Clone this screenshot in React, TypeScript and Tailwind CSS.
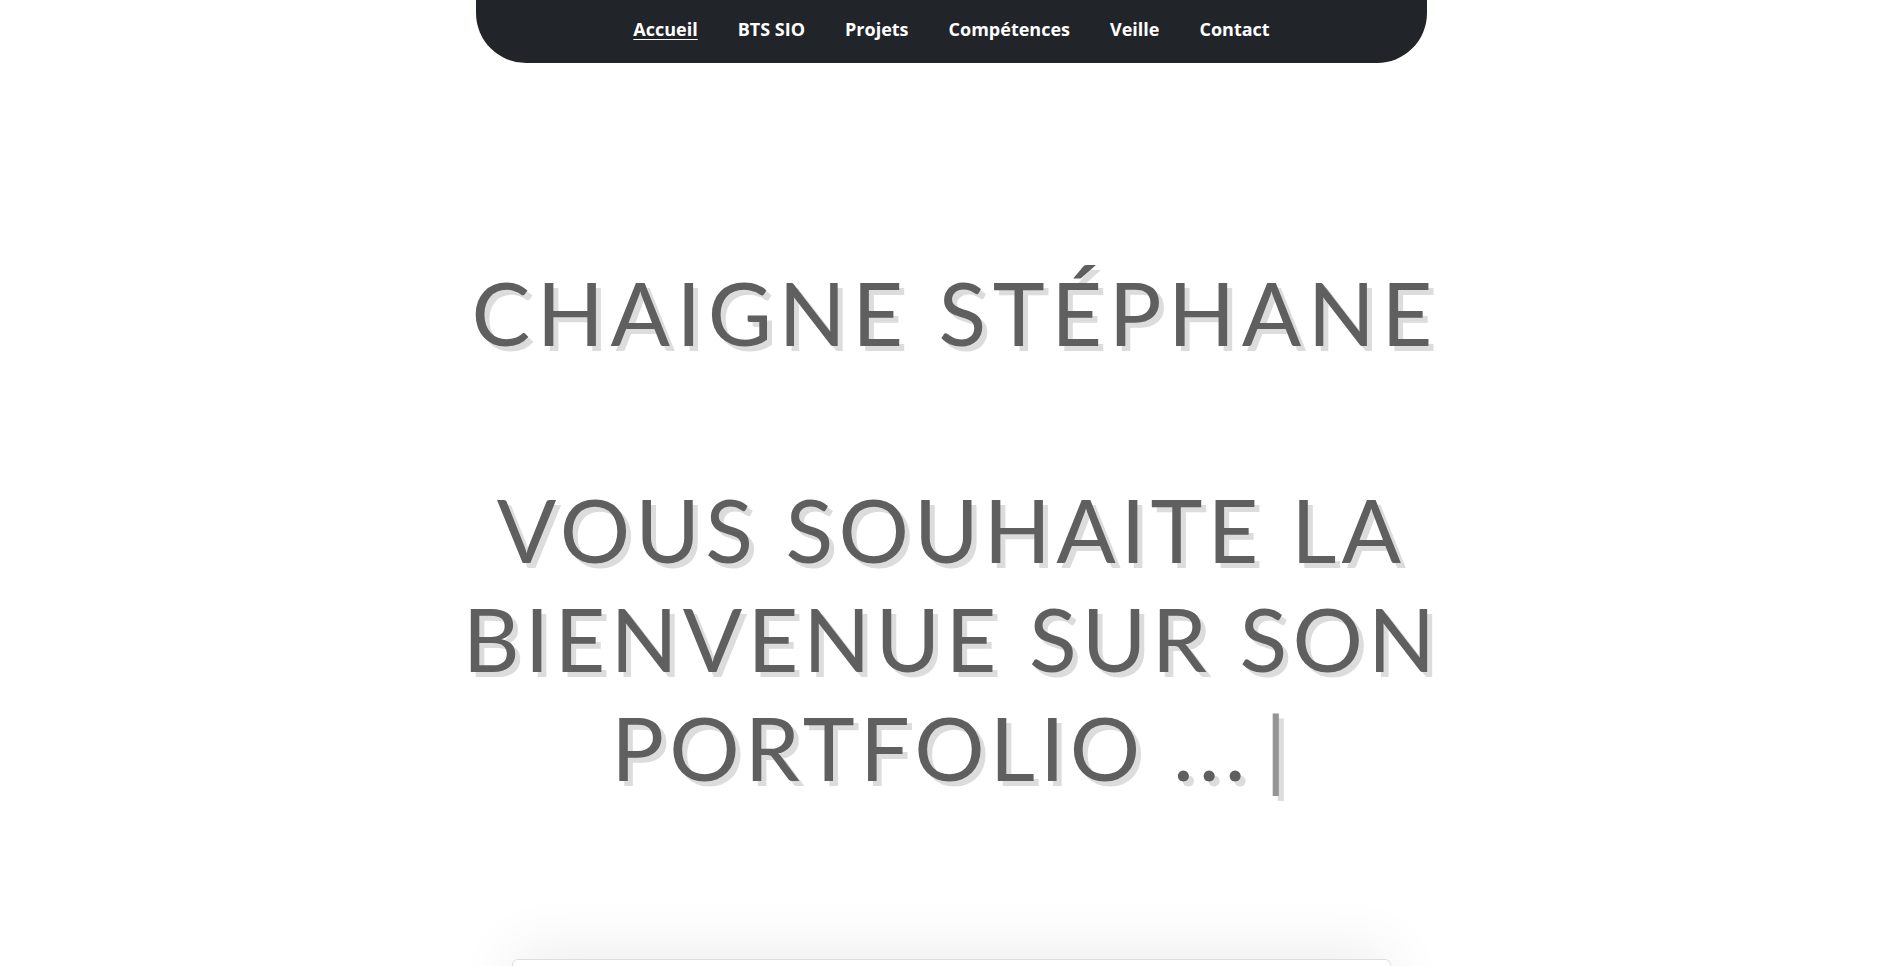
import React from 'react';

const links = ['Accueil', 'BTS SIO', 'Projets', 'Compétences', 'Veille', 'Contact'];

const App: React.FC = () => {
  return (
    <div className="min-h-screen bg-white overflow-hidden">
      {/* Navbar */}
      <nav className="mx-auto w-[951px] h-[63px] bg-[#212529] rounded-b-[50px] flex items-start justify-center pt-[16px] gap-[40px]">
        {links.map((l, i) => (
          <a
            key={l}
            href="#"
            className={`text-white text-[18px] font-bold font-['Open_Sans',sans-serif] leading-[26px] ${i === 0 ? 'underline underline-offset-[3px]' : ''}`}
          >
            {l}
          </a>
        ))}
      </nav>

      {/* Hero */}
      <section className="mx-auto w-[960px] text-center text-[#5f5f5f] font-['Lato',sans-serif] uppercase [text-shadow:5px_5px_0_#dcdcdc]">
        <h1 className="mt-[194px] text-[88px] leading-[110px] tracking-[0.074em] whitespace-nowrap">
          Chaigne Stéphane
        </h1>
        <h2 className="mt-[108px] text-[88px] leading-[109px] tracking-[0.058em] -mx-[20px]">
          Vous souhaite la bienvenue sur son portfolio ...<span className="ml-[14px] text-[#959595]">|</span>
        </h2>
      </section>

      {/* Card */}
      <div className="mx-auto mt-[157px] w-[879px] h-[300px] bg-white border border-[#dedede] rounded-[6px] shadow-[0_-10px_60px_rgba(0,0,0,0.07)]" />
    </div>
  );
};

export default App;
